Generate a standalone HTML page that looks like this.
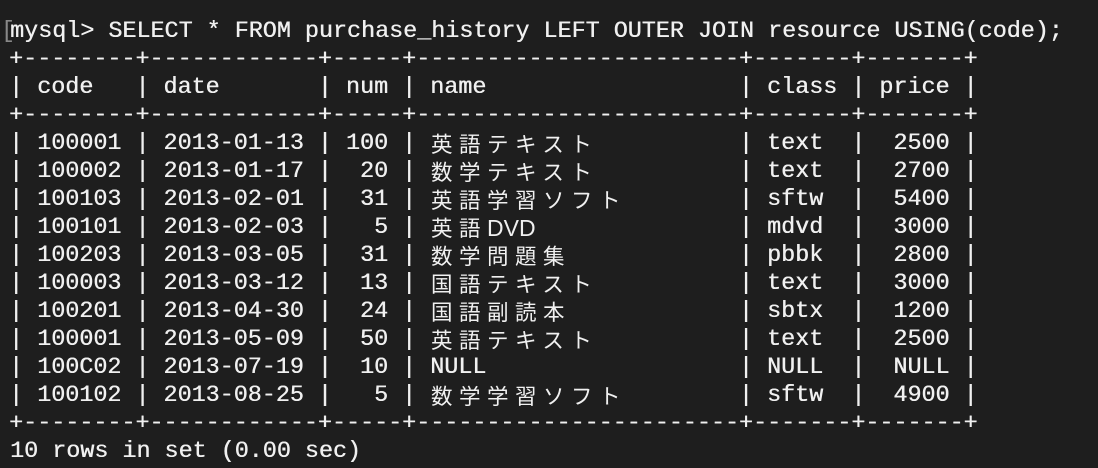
<!DOCTYPE html>
<html><head><meta charset="utf-8"><style>
html,body{margin:0;padding:0;background:#1e1e1e;width:1098px;height:468px;overflow:hidden;}
.l{position:absolute;left:9px;height:28px;line-height:28px;white-space:pre;font-family:"Liberation Mono",monospace;font-size:23.4px;color:#f0f0f0;text-shadow:0.4px 0 0 #f0f0f0;}
.j{position:absolute;left:431px;height:28px;line-height:28px;white-space:pre;font-family:"Noto Sans CJK JP","Liberation Sans",sans-serif;font-size:21.5px;color:#f0f0f0;letter-spacing:6.5px;}
.j b{font-weight:normal;font-family:"Liberation Sans",sans-serif;letter-spacing:0;font-size:23px}
</style></head><body>
<div class="l" style="top:18px;left:1px;color:#888;text-shadow:none">[</div>
<div class="l" style="top:18px;left:10px">mysql&gt; SELECT * FROM purchase_history LEFT OUTER JOIN resource USING(code);</div>
<div class="l" style="top:46px">+--------+------------+-----+-----------------------+-------+-------+</div>
<div class="l" style="top:74px">| code   | date       | num | name                  | class | price |</div>
<div class="l" style="top:102px">+--------+------------+-----+-----------------------+-------+-------+</div>
<div class="l" style="top:130px">| 100001 | 2013-01-13 | 100 |                       | text  |  2500 |</div>
<div class="l" style="top:158px">| 100002 | 2013-01-17 |  20 |                       | text  |  2700 |</div>
<div class="l" style="top:186px">| 100103 | 2013-02-01 |  31 |                       | sftw  |  5400 |</div>
<div class="l" style="top:214px">| 100101 | 2013-02-03 |   5 |                       | mdvd  |  3000 |</div>
<div class="l" style="top:242px">| 100203 | 2013-03-05 |  31 |                       | pbbk  |  2800 |</div>
<div class="l" style="top:270px">| 100003 | 2013-03-12 |  13 |                       | text  |  3000 |</div>
<div class="l" style="top:298px">| 100201 | 2013-04-30 |  24 |                       | sbtx  |  1200 |</div>
<div class="l" style="top:326px">| 100001 | 2013-05-09 |  50 |                       | text  |  2500 |</div>
<div class="l" style="top:354px">| 100C02 | 2013-07-19 |  10 | NULL                  | NULL  |  NULL |</div>
<div class="l" style="top:382px">| 100102 | 2013-08-25 |   5 |                       | sftw  |  4900 |</div>
<div class="l" style="top:410px">+--------+------------+-----+-----------------------+-------+-------+</div>
<div class="l" style="top:438px;left:10px">10 rows in set (0.00 sec)</div>
<div class="j" style="top:130px">英語テキスト</div>
<div class="j" style="top:158px">数学テキスト</div>
<div class="j" style="top:186px">英語学習ソフト</div>
<div class="j" style="top:214px">英語<b>DVD</b></div>
<div class="j" style="top:242px">数学問題集</div>
<div class="j" style="top:270px">国語テキスト</div>
<div class="j" style="top:298px">国語副読本</div>
<div class="j" style="top:326px">英語テキスト</div>
<div class="j" style="top:382px">数学学習ソフト</div>
</body></html>
